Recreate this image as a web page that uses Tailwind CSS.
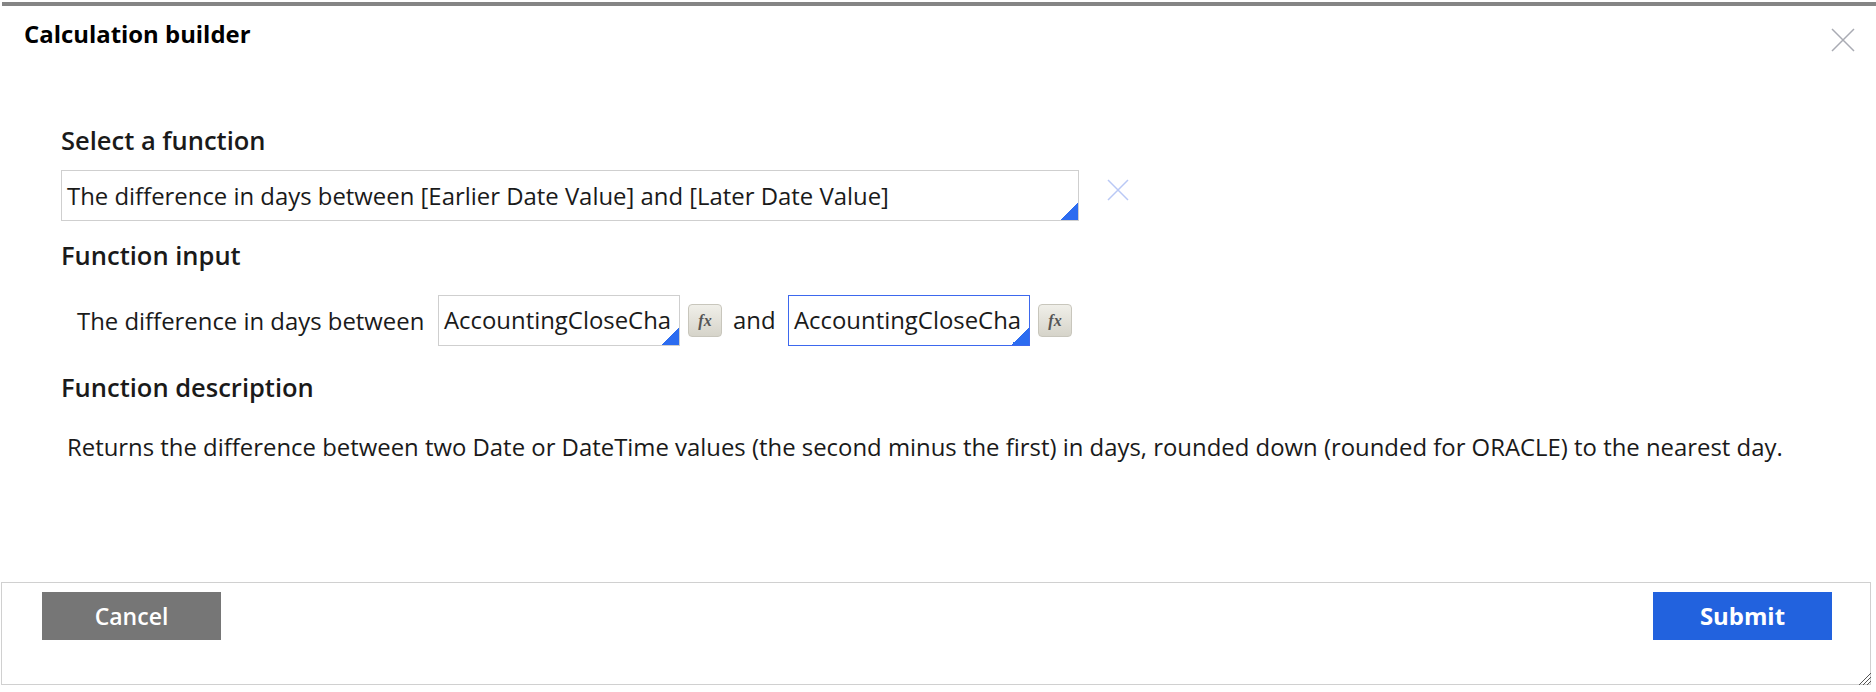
<!DOCTYPE html>
<html lang="en">
<head>
    <meta charset="UTF-8">
    <meta name="viewport" content="width=device-width, initial-scale=1.0">
    <title>Calculation builder</title>
    <script src="https://cdn.jsdelivr.net/npm/@tailwindcss/browser@4"></script>
</head>
<body class="bg-white h-screen overflow-hidden font-['Open_Sans',sans-serif] text-[#1a1a1a] text-[23.9px]">
    <div class="pt-[2px] h-full flex flex-col">
        <div class="h-[4px] bg-[#858585] ml-[2px]"></div>

        <div class="flex justify-between pl-[24px] pr-[21px]">
            <h2 class="font-bold text-[23.9px] leading-[30px] text-black mt-[13px]">Calculation builder</h2>
            <button class="mt-[22px] w-[24px] h-[24px]">
                <svg viewBox="0 0 24 24" class="w-[24px] h-[24px]" fill="none" stroke="#a9abb3" stroke-width="1.5"><path d="M1 1L23 23M23 1L1 23"/></svg>
            </button>
        </div>

        <div class="pl-[61px] flex flex-col flex-1">
            <h3 class="font-semibold text-[25.5px] leading-[32px] mt-[72px]">Select a function</h3>

            <div class="flex items-center mt-[14px]">
                <div class="relative w-[1018px] h-[51px] border-[1.5px] border-[#cfcfcf] pl-[5px] leading-[49px]">
                    The difference in days between [Earlier Date Value] and [Later Date Value]
                    <span class="absolute right-0 bottom-0 w-[18px] h-[18px] bg-[linear-gradient(135deg,transparent_50%,#2c6cf0_50%)]"></span>
                </div>
                <svg viewBox="0 0 22 22" class="w-[22px] h-[22px] ml-[28px] -mt-[12px]" fill="none" stroke="#b9c8f5" stroke-width="1.5"><path d="M1 1L21 21M21 1L1 21"/></svg>
            </div>

            <h3 class="font-semibold text-[25.5px] leading-[32px] mt-[18px]">Function input</h3>

            <div class="flex items-center mt-[24px] pl-[16px]">
                <span class="w-[361px] whitespace-nowrap">The difference in days between</span>
                <div class="relative w-[242px] h-[51px] border-[1.5px] border-[#cfcfcf] pl-[5px] leading-[48px] overflow-hidden whitespace-nowrap">
                    AccountingCloseCha
                    <span class="absolute right-0 bottom-0 w-[18px] h-[18px] bg-[linear-gradient(135deg,transparent_50%,#2c6cf0_50%)]"></span>
                </div>
                <button class="ml-[8px] w-[34px] h-[33px] rounded-[4px] border border-[#c8c6bc] bg-linear-to-b from-[#f0efe9] to-[#d6d4ca] font-['Liberation_Serif',serif] italic font-bold text-[16px] text-[#555] leading-none">fx</button>
                <span class="ml-[11px] w-[55px] -mt-[2px]">and</span>
                <div class="relative w-[242px] h-[51px] border-[1.5px] border-[#3d68ee] pl-[5px] leading-[48px] overflow-hidden whitespace-nowrap">
                    AccountingCloseCha
                    <span class="absolute right-0 bottom-0 w-[18px] h-[18px] bg-[linear-gradient(135deg,transparent_50%,#2c6cf0_50%)]"></span>
                </div>
                <button class="ml-[8px] w-[34px] h-[33px] rounded-[4px] border border-[#c8c6bc] bg-linear-to-b from-[#f0efe9] to-[#d6d4ca] font-['Liberation_Serif',serif] italic font-bold text-[16px] text-[#555] leading-none">fx</button>
            </div>

            <h3 class="font-semibold text-[25.5px] leading-[32px] mt-[25px]">Function description</h3>

            <p class="mt-[29px] pl-[6px] leading-[30px] whitespace-nowrap">Returns the difference between two Date or DateTime values (the second minus the first) in days, rounded down (rounded for ORACLE) to the nearest day.</p>
        </div>

        <div class="relative ml-[1px] mr-[5px] mb-[7px] h-[103px] border-[1.5px] border-[#d0d0d0] flex justify-between items-start pt-[9px] pl-[40px] pr-[38px]">
            <button class="w-[179px] h-[48px] bg-[#767676] text-white font-semibold text-[23px]">Cancel</button>
            <button class="w-[179px] h-[48px] bg-[#2262de] text-white font-bold">Submit</button>
            <svg viewBox="0 0 14 14" class="absolute -right-[2px] -bottom-[2px] w-[14px] h-[14px]" fill="none" stroke="#555" stroke-width="1"><path d="M13 1L1 13M13 5L5 13M13 9L9 13"/></svg>
        </div>
    </div>
</body>
</html>
